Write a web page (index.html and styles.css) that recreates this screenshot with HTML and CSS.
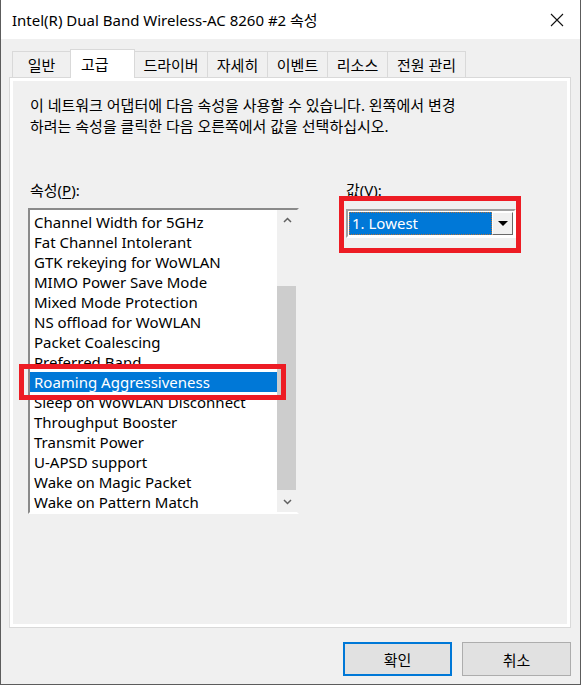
FILE: index.html
```html
<!DOCTYPE html>
<html lang="ko">
<head>
    <meta charset="UTF-8">
    <meta name="viewport" content="width=device-width, initial-scale=1.0">
    <title>Intel(R) Dual Band Wireless-AC 8260 #2 속성</title>
    <link rel="stylesheet" href="styles.css">
</head>
<body>
    <div class="window">
        <div class="titlebar">
            <span class="title">Intel(R) Dual Band Wireless-AC 8260 #2 속성</span>
            <span class="close">
                <svg width="14" height="14" viewBox="0 0 14 14"><path d="M1 1L13 13M13 1L1 13" stroke="#111" stroke-width="1.1" fill="none"/></svg>
            </span>
        </div>

        <div class="sheet">
            <div class="tabs">
                <div class="tab">일반</div>
                <div class="tab active">고급</div>
                <div class="tab">드라이버</div>
                <div class="tab">자세히</div>
                <div class="tab">이벤트</div>
                <div class="tab">리소스</div>
                <div class="tab">전원 관리</div>
            </div>

            <div class="panel">
                <p class="intro">이 네트워크 어댑터에 다음 속성을 사용할 수 있습니다. 왼쪽에서 변경<br>하려는 속성을 클릭한 다음 오른쪽에서 값을 선택하십시오.</p>

                <div class="props">
                    <div class="prop-col">
                        <div class="label">속성(<u>P</u>):</div>
                        <div class="listbox">
                            <ul class="items">
                                <li>Channel Width for 5GHz</li>
                                <li>Fat Channel Intolerant</li>
                                <li>GTK rekeying for WoWLAN</li>
                                <li>MIMO Power Save Mode</li>
                                <li>Mixed Mode Protection</li>
                                <li>NS offload for WoWLAN</li>
                                <li>Packet Coalescing</li>
                                <li>Preferred Band</li>
                                <li class="selected">Roaming Aggressiveness</li>
                                <li>Sleep on WoWLAN Disconnect</li>
                                <li>Throughput Booster</li>
                                <li>Transmit Power</li>
                                <li>U-APSD support</li>
                                <li>Wake on Magic Packet</li>
                                <li>Wake on Pattern Match</li>
                            </ul>
                            <div class="scrollbar">
                                <div class="arrow">
                                    <svg width="9" height="6" viewBox="0 0 9 6"><path d="M1 5L4.5 1.5L8 5" stroke="#606060" stroke-width="1.5" fill="none"/></svg>
                                </div>
                                <div class="track"><div class="thumb"></div></div>
                                <div class="arrow">
                                    <svg width="9" height="6" viewBox="0 0 9 6"><path d="M1 1L4.5 4.5L8 1" stroke="#606060" stroke-width="1.5" fill="none"/></svg>
                                </div>
                            </div>
                        </div>
                    </div>

                    <div class="value-col">
                        <div class="label">값(<u>V</u>):</div>
                        <div class="combo">
                            <div class="combo-value">1. Lowest</div>
                            <div class="combo-btn"><span class="caret"></span></div>
                        </div>
                    </div>
                </div>

                <!-- 빨간 강조 표시 -->
                <div class="mark mark-combo"></div>
                <div class="mark mark-item"></div>
            </div>

            <div class="buttons">
                <button class="btn default">확인</button>
                <button class="btn">취소</button>
            </div>
        </div>
    </div>
</body>
</html>
```

FILE: styles.css
```css
body {
    margin: 0;
    font-family: "Noto Sans", "Noto Sans CJK KR", sans-serif;
    font-size: 15px;
    color: #000;
}

.window {
    width: 581px;
    height: 685px;
    box-sizing: border-box;
    border: 1px solid #5c5c5c;
    border-top: 0;
    background-color: #f0f0f0;
    display: flex;
    flex-direction: column;
}

.titlebar {
    height: 39px;
    flex-shrink: 0;
    background-color: #fff;
    display: flex;
    align-items: center;
    justify-content: space-between;
    padding-left: 11px;
}

.close {
    width: 46px;
    height: 39px;
    display: flex;
    align-items: center;
    justify-content: center;
}

.sheet {
    flex: 1;
    display: flex;
    flex-direction: column;
    padding: 10px 9px 0 8px;
}

.tabs {
    display: flex;
    align-items: flex-end;
    height: 28px;
    padding-left: 3px;
}

.tab {
    height: 26px;
    box-sizing: border-box;
    border: 1px solid #d9d9d9;
    border-bottom: 0;
    margin-left: -1px;
    display: flex;
    align-items: center;
    justify-content: center;
    background-color: #f0f0f0;
}

.tab:nth-child(1) { width: 59px; margin-left: 0; }
.tab:nth-child(2) { width: 65px; }
.tab:nth-child(3) { width: 74px; }
.tab:nth-child(4) { width: 61px; }
.tab:nth-child(5) { width: 61px; }
.tab:nth-child(6) { width: 61px; }
.tab:nth-child(7) { width: 79px; }

.tab.active {
    height: 29px;
    margin-bottom: -1px;
    padding-bottom: 2px;
    justify-content: flex-start;
    padding-left: 10px;
    background-color: #fff;
    position: relative;
    z-index: 1;
}

.panel {
    height: 551px;
    box-sizing: border-box;
    border: 1px solid #d9d9d9;
    box-shadow: inset 0 0 0 3px #fff;
    padding: 17px 0 0 18px;
    position: relative;
}

.intro {
    margin: 0;
    padding-left: 2px;
    line-height: 21px;
}

.props {
    display: flex;
    gap: 45px;
    margin-top: 43px;
}

.label {
    line-height: 21px;
    padding-left: 2px;
}

.label u {
    text-underline-offset: 2px;
}

.prop-col .label {
    margin-bottom: 7px;
}

.listbox {
    width: 271px;
    height: 306px;
    box-sizing: border-box;
    border: 2px solid;
    border-color: #8a8a8a #f0f0f0 #fff #8a8a8a;
    background-color: #fff;
    display: flex;
}

.items {
    flex: 1;
    list-style: none;
    margin: 0;
    padding: 2px 0 0;
}

.items li {
    height: 20px;
    line-height: 20px;
    padding-left: 4px;
    white-space: nowrap;
}

.items li.selected {
    background-color: #0078d7;
    color: #fff;
}

.scrollbar {
    width: 20px;
    background-color: #f0f0f0;
    display: flex;
    flex-direction: column;
}

.arrow {
    height: 20px;
    display: flex;
    align-items: center;
    justify-content: center;
}

.track {
    flex: 1;
}

.thumb {
    margin: 56px 1px 0 0;
    height: 204px;
    background-color: #cdcdcd;
}

.value-col .label {
    margin-bottom: 8px;
}

.combo {
    margin-left: 2px;
    width: 170px;
    height: 29px;
    box-sizing: border-box;
    border: 2px solid;
    border-color: #a0a0a0 #fff #fff #a0a0a0;
    background-color: #fff;
    padding: 1px;
    display: flex;
}

.combo-value {
    flex: 1;
    background-color: #0078d7;
    color: #fff;
    border: 1px dotted #b5733a;
    line-height: 21px;
    padding-left: 2px;
}

.combo-btn {
    width: 21px;
    box-sizing: border-box;
    border: 1px solid;
    border-color: #fff #696969 #696969 #fff;
    background-color: #f0f0f0;
    display: flex;
    align-items: center;
    justify-content: center;
}

.caret {
    border-left: 5px solid transparent;
    border-right: 5px solid transparent;
    border-top: 5px solid #000;
}

.mark {
    position: absolute;
    box-sizing: border-box;
    border: 5px solid #ed1c24;
}

.mark-combo {
    left: 329px;
    top: 118px;
    width: 182px;
    height: 57px;
}

.mark-item {
    left: 9px;
    top: 286px;
    width: 267px;
    height: 36px;
}

.buttons {
    display: flex;
    justify-content: flex-end;
    gap: 10px;
    margin-top: 14px;
}

.btn {
    width: 109px;
    height: 34px;
    font-family: inherit;
    font-size: 15px;
    color: #000;
    background-color: #e1e1e1;
    border: 1px solid #adadad;
}

.btn.default {
    border-color: #0078d7;
    box-shadow: inset 0 0 0 1px #0078d7;
}
```
